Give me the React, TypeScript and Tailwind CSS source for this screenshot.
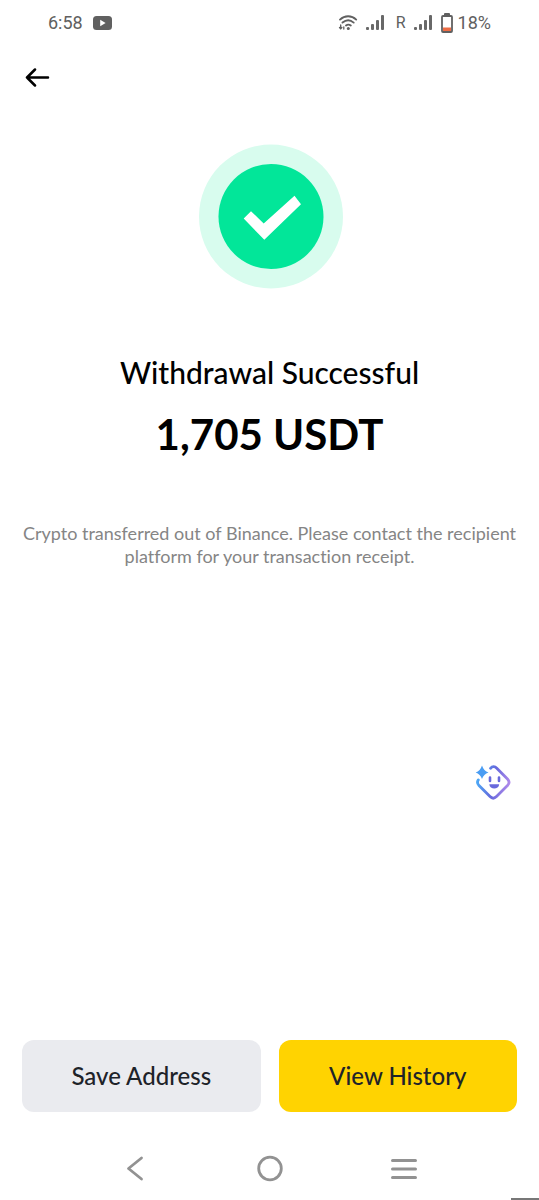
import React from "react";

function SignalIcon() {
  return (
    <svg width="18" height="16" viewBox="0 0 18 16" fill="#686868" aria-hidden="true">
      <rect x="0" y="12" width="3" height="3" rx="1" />
      <rect x="5" y="9" width="3" height="6" rx="1" />
      <rect x="10" y="5" width="3" height="10" rx="1" />
      <rect x="15" y="0" width="3" height="15" rx="1" />
    </svg>
  );
}

function WifiIcon() {
  return (
    <svg width="20" height="16" viewBox="0 0 20 16" fill="none" stroke="#606060" strokeWidth="1.9" strokeLinecap="round" aria-hidden="true">
      <path d="M2 4.600C6.700.2 13.600.2 18.200 4.600" />
      <path d="M4.500 7.600C8 4.700 12.300 4.700 15.700 7.600" />
      <path d="M8 10.500C9.500 9.400 11.300 9.400 12.800 10.500" />
      <circle cx="10.300" cy="13.500" r="1.500" fill="#606060" stroke="none" />
      <path d="M2.700 10v3.500M1.500 12.500l1.200 1.300 1.200-1.300M5.800 14v-2" strokeWidth="1.300" />
    </svg>
  );
}

function BatteryIcon() {
  return (
    <svg width="14" height="20" viewBox="0 0 14 20" aria-hidden="true">
      <rect x="4" y="0" width="6" height="3" rx="1" fill="#606060" />
      <rect x="2" y="3" width="10" height="16" rx="1" fill="white" stroke="#606060" strokeWidth="1.800" />
      <rect x="3" y="14.500" width="8" height="3.500" fill="#ee6c45" />
    </svg>
  );
}

function StatusBar() {
  return (
    <div className="flex h-11 items-center justify-between px-12 pt-0.5 font-['Roboto',sans-serif] text-lg text-[#606060]">
      <div className="flex items-center gap-2.5">
        <span>6:58</span>
        <svg width="19" height="14" viewBox="0 0 19 14" role="img" aria-label="YouTube">
          <rect width="19" height="14" rx="3.500" fill="#606060" />
          <path d="M7.200 3.800v6.400l5.400-3.200z" fill="white" />
        </svg>
      </div>
      <div className="flex items-center">
        <WifiIcon />
        <span className="ml-2"><SignalIcon /></span>
        <span className="ml-3 text-base">R</span>
        <span className="ml-2"><SignalIcon /></span>
        <span className="ml-2"><BatteryIcon /></span>
        <span className="ml-1">18%</span>
      </div>
    </div>
  );
}

function Assistant() {
  return (
    <button type="button" aria-label="Assistant" className="absolute top-[764px] right-7">
      <svg width="36" height="37" viewBox="0 0 36 37" fill="none">
        <defs>
          <linearGradient id="edge" x1="2" y1="16" x2="35" y2="22" gradientUnits="userSpaceOnUse">
            <stop stopColor="#4ca9f6" />
            <stop offset="0.500" stopColor="#6668dc" />
            <stop offset="1" stopColor="#b38beb" />
          </linearGradient>
        </defs>
        <path d="M15.500 4.300C17.300 2.200 19.800 2.200 21.800 4.200L32.500 15C34.500 17.100 34.500 19.500 32.500 21.600L21.500 32.600C19.500 34.600 17 34.600 15 32.600L4 21.600C2.300 19.800 2.100 17.700 3.300 15.900" stroke="url(#edge)" strokeWidth="2.800" strokeLinecap="round" />
        <path d="M7 1.500Q8.700 6.800 13.500 8.500Q8.700 10.200 7 15Q5.300 10.200.7 8.500Q5.300 6.800 7 1.500Z" fill="#4a9df3" />
        <path d="M15 13.500v3.500M24 13.500v3.500" stroke="#6869dc" strokeWidth="2.600" strokeLinecap="round" />
        <path d="M14.300 20.200H24.200C23.800 26 14.700 26 14.300 20.200Z" fill="#6869dc" />
      </svg>
    </button>
  );
}

export default function App() {
  return (
    <div className="relative flex min-h-screen flex-col overflow-hidden bg-white font-['Lato',sans-serif] text-black [font-variant-ligatures:none]">
      <StatusBar />
      <header className="flex h-16 items-center px-6 pt-0.5">
        <button type="button" aria-label="Back">
          <svg width="26" height="20" viewBox="0 0 26 20" fill="none" stroke="black" strokeWidth="2.500" strokeLinecap="round" strokeLinejoin="round">
            <path d="M24 10.500H3M11 2.500L3 10.500L11 18.500" />
          </svg>
        </button>
      </header>
      <main className="flex flex-1 flex-col items-center px-5 pt-9 text-center">
        <svg width="146" height="146" viewBox="0 0 146 146" role="img" aria-label="Success">
          <circle cx="74" cy="72.500" r="72" fill="#d8fcee" />
          <circle cx="74" cy="72.500" r="52.500" fill="#02e699" />
          <path d="M46.700 74.500L54 67.200L66.700 79.500L97.500 51.800L104 60.200L67.300 95.800Z" fill="white" />
        </svg>
        <h1 className="mt-15 text-[30px] leading-11 font-medium">Withdrawal Successful</h1>
        <p className="mt-4 text-[42px] leading-12 font-bold">1,705 USDT</p>
        <p className="mt-16 text-lg leading-[23px] text-[#858585]">
          Crypto transferred out of Binance. Please contact the recipient platform for your transaction receipt.
        </p>
      </main>
      <Assistant />
      <div className="grid grid-cols-2 gap-4.5 px-5.5 text-2xl font-medium text-[#1e2329]">
        <button type="button" className="h-18 rounded-xl bg-[#eaebef]">Save Address</button>
        <button type="button" className="h-18 rounded-xl bg-[#ffd301]">View History</button>
      </div>
      <nav aria-label="System navigation" className="flex h-22 items-center justify-center gap-26 pt-6">
        <button type="button" aria-label="Back">
          <svg width="30" height="30" viewBox="0 0 30 30" fill="none" stroke="#929292" strokeWidth="2.800" strokeLinecap="round" strokeLinejoin="round"><path d="M20.500 5L7.500 15.500L20.500 26" /></svg>
        </button>
        <button type="button" aria-label="Home">
          <svg width="30" height="30" viewBox="0 0 30 30" fill="none" stroke="#929292" strokeWidth="2.800"><circle cx="15" cy="15.500" r="11.300" /></svg>
        </button>
        <button type="button" aria-label="Recent apps">
          <svg width="30" height="30" viewBox="0 0 30 30" fill="none" stroke="#929292" strokeWidth="3" strokeLinecap="round"><path d="M3.500 7.500H26.500M3.500 16H26.500M3.500 24.500H26.500" /></svg>
        </button>
      </nav>
      <div className="absolute right-0 bottom-0 h-0.5 w-7 bg-[#777777]" />
    </div>
  );
}
